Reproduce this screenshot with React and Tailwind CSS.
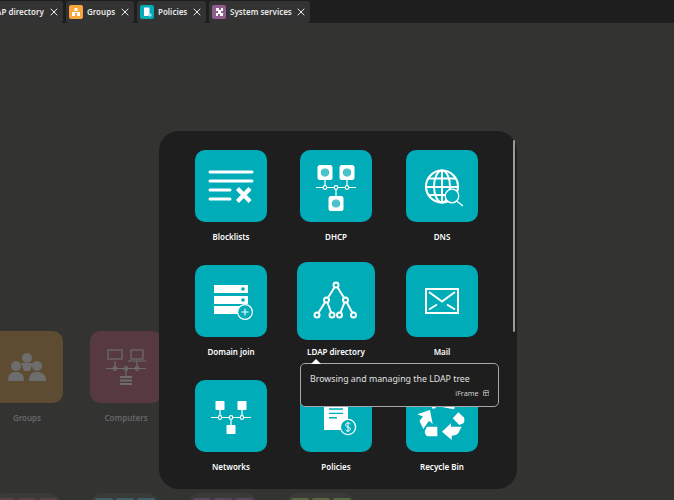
import { X } from "lucide-react";

const font = "font-['Noto_Sans','Open_Sans',sans-serif]";

function BlocklistIcon() {
  return (
    <svg viewBox="0 0 72 72" className="h-[72px] w-[72px]" fill="none" stroke="white" strokeWidth="3" aria-hidden>
      <path d="M15 22H57M15 31H57M15 40H35M15 49H35" strokeLinecap="round" />
      <path d="M42.5 38.5L55 51.5M55 38.5L42.5 51.5" strokeWidth="4.2" />
    </svg>
  );
}

function Globe({ x, y }) {
  return (
    <g>
      <rect x={x - 7.5} y={y - 7.5} width="15" height="15" rx="2.5" fill="white" />
      <circle cx={x} cy={y} r="4" fill="#1fb5bf" />
      <path d={`M${x} ${y - 4}V${y + 4}M${x - 2} ${y - 3.5}V${y + 3.5}M${x + 2} ${y - 3.5}V${y + 3.5}`} stroke="white" strokeWidth="0.4" />
    </g>
  );
}

function DhcpIcon() {
  return (
    <svg viewBox="0 0 72 72" className="h-[72px] w-[72px]" fill="none" stroke="white" strokeWidth="1.2" aria-hidden>
      <path d="M16 37.5H56M25 30V37.5M47 30V37.5M36 37.5V46" />
      <circle cx="25" cy="37.5" r="1.8" fill="#00acb8" />
      <circle cx="36" cy="37.5" r="1.8" fill="#00acb8" />
      <circle cx="47" cy="37.5" r="1.8" fill="#00acb8" />
      <g stroke="none">
        <Globe x={25} y={22.5} />
        <Globe x={47} y={22.5} />
        <Globe x={36} y={53.5} />
      </g>
    </svg>
  );
}

function DnsIcon() {
  return (
    <svg viewBox="0 0 72 72" className="h-[72px] w-[72px]" fill="none" stroke="white" strokeWidth="2" aria-hidden>
      <circle cx="36" cy="36.5" r="16" strokeWidth="2.2" />
      <ellipse cx="36" cy="36.5" rx="8" ry="16" />
      <path d="M36 20.5V52.5M23 28.5H49M20.5 37H52M23 45H42" />
      <circle cx="46" cy="46" r="6.8" fill="#00acb8" strokeWidth="1.3" />
      <path d="M50.5 51L57 56" strokeWidth="1.3" />
    </svg>
  );
}

function DomainJoinIcon() {
  return (
    <svg viewBox="0 0 72 72" className="h-[72px] w-[72px]" aria-hidden>
      <rect x="19" y="20" width="34" height="8" fill="white" />
      <rect x="19" y="31" width="34" height="8" fill="white" />
      <rect x="19" y="41" width="34" height="8" fill="white" />
      <circle cx="48" cy="24" r="1.8" fill="#00acb8" />
      <circle cx="48" cy="35" r="1.8" fill="#00acb8" />
      <circle cx="50" cy="47" r="7.4" fill="#00acb8" stroke="white" strokeWidth="1.2" />
      <path d="M50 43.4V50.6M46.4 47H53.6" stroke="white" strokeWidth="1" />
    </svg>
  );
}

function TreeIcon() {
  return (
    <svg viewBox="0 0 78 78" className="h-[78px] w-[78px]" fill="none" stroke="white" strokeWidth="2" aria-hidden>
      <path d="M39 23L29.5 38M39 23L48.5 38M29.5 38L20 53M29.5 38L35 53M48.5 38L42.5 53M48.5 38L56.5 53" />
      <g fill="#00acb8">
        <circle cx="39" cy="23" r="2.5" />
        <circle cx="29.5" cy="38" r="2.5" />
        <circle cx="48.5" cy="38" r="2.5" />
        <circle cx="20" cy="53" r="2.5" />
        <circle cx="35" cy="53" r="2.5" />
        <circle cx="42.5" cy="53" r="2.5" />
        <circle cx="56.5" cy="53" r="2.5" />
      </g>
    </svg>
  );
}

function MailIcon() {
  return (
    <svg viewBox="0 0 72 72" className="h-[72px] w-[72px]" fill="none" stroke="white" strokeWidth="2" aria-hidden>
      <rect x="20" y="24" width="32" height="24" />
      <path d="M23 27L36 36.5L49 27M23 44.5L31 39.5M49 44.5L41 39.5" />
    </svg>
  );
}

function NetworksIcon() {
  return (
    <svg viewBox="0 0 72 72" className="h-[72px] w-[72px]" fill="none" stroke="white" strokeWidth="1.2" aria-hidden>
      <path d="M16 37.5H56M25 30V37.5M47 30V37.5M36 37.5V45" />
      <circle cx="25" cy="37.5" r="1.8" fill="#00acb8" />
      <circle cx="36" cy="37.5" r="1.8" fill="#00acb8" />
      <circle cx="47" cy="37.5" r="1.8" fill="#00acb8" />
      <g fill="white" stroke="none">
        <rect x="20.5" y="21" width="9" height="9" rx="0.8" />
        <rect x="42.5" y="21" width="9" height="9" rx="0.8" />
        <rect x="31.5" y="45" width="9" height="9" rx="0.8" />
      </g>
    </svg>
  );
}

function PoliciesIcon() {
  return (
    <svg viewBox="0 0 72 72" className="h-[72px] w-[72px]" aria-hidden>
      <path d="M24 14H48V50H24Z" fill="white" />
      <path d="M29 29H43M29 33.4H43M29 37.8H37" stroke="#00acb8" strokeWidth="1.4" />
      <circle cx="48" cy="47" r="7.6" fill="#00acb8" stroke="white" strokeWidth="1.3" />
      <path d="M50.4 44C49.4 42.6 45.6 42.6 45.6 45C45.6 47.4 50.4 46.6 50.4 49C50.4 51.4 46.6 51.4 45.6 50M48 42V52" fill="none" stroke="white" strokeWidth="1" />
    </svg>
  );
}

function RecycleIcon() {
  return (
    <svg viewBox="0 0 72 72" className="h-[72px] w-[72px]" fill="white" aria-hidden>
      <path d="M25.7 25.7H30.7L29 28.5H26Z" />
      <path d="M35.7 25.7H49L48 29.3L37 27.3Z" />
      <path d="M11.3 34.3L24 30L26.7 44.3L23 40.7L17.3 49L13.5 41L17 36.5Z" />
      <path d="M21 46.7H31.3V56.3H22.5C19.5 56.3 18.5 53 19 50.5Z" />
      <path d="M36 51.7L45 43.3V46.7H55.7L52.3 53.3C51 55 48 55.7 45.7 55.7V60Z" />
      <path d="M52.3 32.3L58 37.5C58.8 40 58.3 42.5 57.3 43.3L53.3 45L46.7 38.3Z" />
    </svg>
  );
}

const apps = [
  { name: "Blocklists", icon: <BlocklistIcon /> },
  { name: "DHCP", icon: <DhcpIcon /> },
  { name: "DNS", icon: <DnsIcon /> },
  { name: "Domain join", icon: <DomainJoinIcon /> },
  { name: "LDAP directory", icon: <TreeIcon />, active: true },
  { name: "Mail", icon: <MailIcon /> },
  { name: "Networks", icon: <NetworksIcon /> },
  { name: "Policies", icon: <PoliciesIcon /> },
  { name: "Recycle Bin", icon: <RecycleIcon /> },
];

function AppTile({ app }) {
  return (
    <div className="flex w-[72px] flex-col items-center">
      <div className="flex h-[72px] w-[72px] items-center justify-center">
        <div
          className={
            app.active
              ? "flex h-[78px] w-[78px] shrink-0 items-center justify-center rounded-[10px] bg-[#00acb8]"
              : "flex h-[72px] w-[72px] shrink-0 items-center justify-center rounded-[10px] bg-[#00acb8]"
          }
        >
          {app.icon}
        </div>
      </div>
      <span className="mt-[8px] whitespace-nowrap text-[8px] leading-[13px] font-semibold text-white">
        {app.name}
      </span>
    </div>
  );
}

function Tab({ color, label, width, children }) {
  return (
    <div className={`flex h-[22px] shrink-0 items-center rounded-[3px] bg-[#333333] pl-[3px] ${width}`}>
      <span className={`mr-[4px] flex h-[14px] w-[14px] items-center justify-center rounded-[2px] ${color}`}>
        {children}
      </span>
      <span className="whitespace-nowrap text-[8px] font-semibold text-[#e8e8e8]">{label}</span>
      <X className="ml-auto mr-[3px] h-[12px] w-[12px] text-white" strokeWidth={1.8} />
    </div>
  );
}

function BgTile({ color, label, children }) {
  return (
    <div className="flex w-[72px] shrink-0 flex-col items-center">
      <div className={`flex h-[72px] w-[72px] items-center justify-center rounded-[10px] ${color}`}>{children}</div>
      <span className="mt-[8px] text-[8px] leading-[13px] font-semibold text-[#666666]">{label}</span>
    </div>
  );
}

function Folder({ color }) {
  return (
    <div className="flex h-[20px] w-[71px] shrink-0 justify-center gap-[3px] rounded-t-[14px] bg-[#3a3a39] pt-[5px]">
      <span className={`h-[12px] w-[18px] rounded-[2px] ${color}`} />
      <span className={`h-[12px] w-[18px] rounded-[2px] ${color}`} />
      <span className={`h-[12px] w-[18px] rounded-[2px] ${color}`} />
    </div>
  );
}

export default function App() {
  return (
    <div className={`relative flex h-[500px] w-[674px] flex-col overflow-hidden bg-[#333332] ${font}`}>
      <div className="flex h-[23px] shrink-0 items-start gap-[3px] bg-[#1e1e1e] pt-px">
        <Tab label="LDAP directory" width="ml-[-35px] w-[98px]" color="bg-[#00acb8]" />
        <Tab label="Groups" width="w-[68px]" color="bg-[#f9a63d]">
          <svg viewBox="0 0 14 14" className="h-[14px] w-[14px]" fill="white" aria-hidden>
            <rect x="5.5" y="3" width="3" height="3" />
            <rect x="3" y="8" width="3" height="3" />
            <rect x="8" y="8" width="3" height="3" />
            <path d="M3 7H11V8H3Z" />
          </svg>
        </Tab>
        <Tab label="Policies" width="w-[69px]" color="bg-[#00acb8]">
          <svg viewBox="0 0 14 14" className="h-[14px] w-[14px]" fill="white" aria-hidden>
            <path d="M4 2.5H9.5V11H4Z" />
            <circle cx="10" cy="10" r="1.8" fill="#9adfe4" />
          </svg>
        </Tab>
        <Tab label="System services" width="w-[101px]" color="bg-[#8f5c8c]">
          <svg viewBox="0 0 14 14" className="h-[14px] w-[14px]" fill="white" aria-hidden>
            <path d="M4 3H7V5H9V3H11V6H9V8H11V11H8V9H6V11H4V8H6V6H4Z" />
          </svg>
        </Tab>
      </div>

      {/* dimmed desktop behind the launcher */}
      <div className="flex flex-1 flex-col justify-between pt-[308px]">
        <div className="ml-[-9px] flex gap-[27px]">
          <BgTile color="bg-[#5d4c31]" label="Groups">
            <svg viewBox="0 0 72 72" className="h-[72px] w-[72px]" fill="#6d6d6d" aria-hidden>
              <circle cx="36" cy="27" r="5" />
              <path d="M30 32H42L39 40H33Z" />
              <circle cx="25" cy="35" r="5" />
              <path d="M17 50C17 43 20 41 25 41C30 41 33 43 33 50Z" />
              <circle cx="46" cy="35" r="5" />
              <path d="M38 50C38 43 41 41 46 41C51 41 55 43 55 50Z" />
            </svg>
          </BgTile>
          <BgTile color="bg-[#573a41]" label="Computers">
            <svg viewBox="0 0 72 72" className="h-[72px] w-[72px]" fill="none" stroke="#6d6d6d" strokeWidth="1.2" aria-hidden>
              <rect x="18" y="19" width="14" height="9" />
              <rect x="41" y="19" width="12" height="9" />
              <path d="M16 37.5H56M25 30V37.5M47 30V37.5M36 37.5V45M38 30H56" />
              <circle cx="25" cy="37.5" r="1.8" />
              <circle cx="36" cy="37.5" r="1.8" />
              <circle cx="47" cy="37.5" r="1.8" />
              <path d="M30 46H42M30 49.5H42M30 53H42" strokeWidth="2.2" />
            </svg>
          </BgTile>
        </div>
        <div className="flex h-[7px] items-start gap-[27px] overflow-hidden">
          <div className="ml-[-9px]"><Folder color="bg-[#5b3f47]" /></div>
          <Folder color="bg-[#3d5f63]" />
          <Folder color="bg-[#55465a]" />
          <Folder color="bg-[#55683f]" />
        </div>
      </div>

      {/* launcher overlay */}
      <div className="absolute left-[159px] top-[131px] h-[358px] w-[358px] rounded-[20px] bg-[#1e1e1e]">
        <div className="grid grid-cols-[105px_106px_72px] gap-y-[22px] pl-[36px] pt-[19px]">
          {apps.map((app) => (
            <AppTile key={app.name} app={app} />
          ))}
        </div>
        <div className="absolute right-[2px] top-[9px] h-[192px] w-[2px] rounded-full bg-[#9a9a9a]" />
      </div>

      {/* tooltip */}
      <div className="absolute left-[300px] top-[363px] h-[44px] w-[199px] rounded-[5px] border border-[#a8a8a8] bg-[#1e1e1e] pl-[9px] pr-[9px] pt-[9px]">
        <div className="absolute left-[10px] top-[-5px] h-0 w-0 border-x-[5px] border-b-[5px] border-x-transparent border-b-white" />
        <p className="whitespace-nowrap text-[8.8px] leading-[13px] text-[#e0e0e0]">Browsing and managing the LDAP tree</p>
        <div className="mt-[2px] flex items-center justify-end gap-[4px] text-[7.2px] leading-[10px] text-[#cfcfcf]">
          <span>iFrame</span>
          <svg viewBox="0 0 8 8" className="h-[6.5px] w-[6.5px]" fill="none" stroke="currentColor" strokeWidth="0.9" aria-hidden>
            <rect x="0.7" y="0.7" width="6.6" height="6.6" rx="1" />
            <path d="M0.7 3H7.3M3.5 3V7.3" />
          </svg>
        </div>
      </div>
    </div>
  );
}
